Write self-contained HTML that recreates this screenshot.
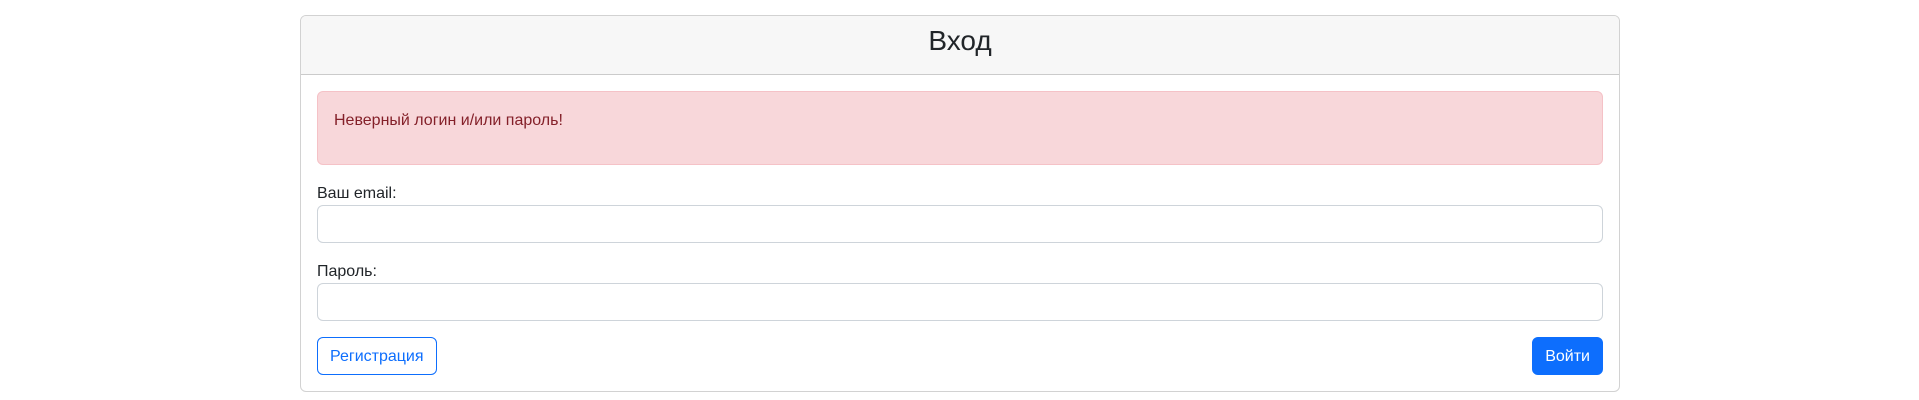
<!DOCTYPE html>
<html><head><meta charset="utf-8"><style>
*{box-sizing:border-box}
body{margin:0;background:#fff;font-family:"Liberation Sans",sans-serif;font-size:16px;line-height:1.5;color:#212529}
.card{position:absolute;left:300px;top:15px;width:1320px;border:1px solid rgba(0,0,0,.175);border-radius:6px;overflow:hidden}
.hd{background:#f7f7f7;border-bottom:1px solid rgba(0,0,0,.175);padding:8px 16px;text-align:center;height:59px}
.hd h3{margin:0;font-size:28px;font-weight:500;line-height:1.2}
.bd{padding:16px}
.alert{background:#f8d7da;border:1px solid #f5c2c7;color:#842029;border-radius:6px;padding:16px;margin-bottom:16px}
.alert p{margin:0 0 16px;position:relative;top:1px}
label{display:block;position:relative;top:1px}
.inp{height:38px;border:1px solid #ced4da;border-radius:6px;margin-bottom:16px}
.btns{display:flex;justify-content:space-between}
.btn{height:38px;padding:7px 12px 5px;border-radius:6px;border:1px solid #0d6efd;font-size:16px;line-height:24px}
.o{color:#0d6efd;background:#fff}.p{color:#fff;background:#0d6efd}
</style></head><body>
<div class="card"><div class="hd"><h3>Вход</h3></div>
<div class="bd">
<div class="alert"><p>Неверный логин и/или пароль!</p></div>
<label>Ваш email:</label><div class="inp"></div>
<label>Пароль:</label><div class="inp"></div>
<div class="btns"><span class="btn o">Регистрация</span><span class="btn p">Войти</span></div>
</div></div>
</body></html>
